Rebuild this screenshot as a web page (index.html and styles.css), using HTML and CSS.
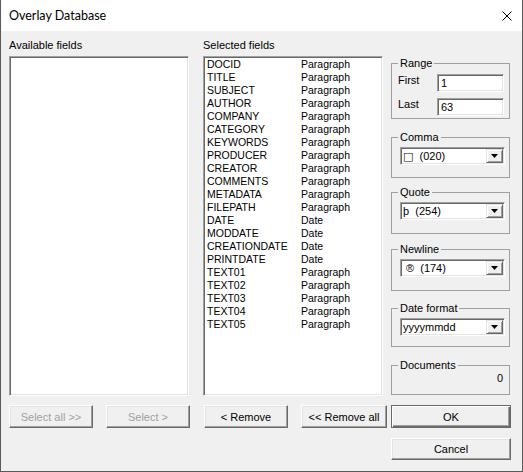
FILE: index.html
```html
<!DOCTYPE html>
<html>
<head>
<meta charset="utf-8">
<link rel="stylesheet" href="styles.css">
</head>
<body>
<div class="window">
  <div class="titlebar">
    <span class="title">Overlay Database</span>
    <svg class="close" width="10" height="10" viewBox="0 0 10 10"><path d="M0.5 0.5L9.5 9.5M9.5 0.5L0.5 9.5" stroke="#000" stroke-width="1" fill="none"/></svg>
  </div>
  <div class="content">
    <div class="panel">
      <div class="label">Available fields</div>
      <div class="listbox"></div>
      <div class="btnrow">
        <div class="btn disabled">Select all &gt;&gt;</div>
        <div class="btn disabled">Select &gt;</div>
      </div>
    </div>
    <div class="panel panel-selected">
      <div class="label">Selected fields</div>
      <div class="listbox">
        <div class="row"><span class="name">DOCID</span><span>Paragraph</span></div>
        <div class="row"><span class="name">TITLE</span><span>Paragraph</span></div>
        <div class="row"><span class="name">SUBJECT</span><span>Paragraph</span></div>
        <div class="row"><span class="name">AUTHOR</span><span>Paragraph</span></div>
        <div class="row"><span class="name">COMPANY</span><span>Paragraph</span></div>
        <div class="row"><span class="name">CATEGORY</span><span>Paragraph</span></div>
        <div class="row"><span class="name">KEYWORDS</span><span>Paragraph</span></div>
        <div class="row"><span class="name">PRODUCER</span><span>Paragraph</span></div>
        <div class="row"><span class="name">CREATOR</span><span>Paragraph</span></div>
        <div class="row"><span class="name">COMMENTS</span><span>Paragraph</span></div>
        <div class="row"><span class="name">METADATA</span><span>Paragraph</span></div>
        <div class="row"><span class="name">FILEPATH</span><span>Paragraph</span></div>
        <div class="row"><span class="name">DATE</span><span>Date</span></div>
        <div class="row"><span class="name">MODDATE</span><span>Date</span></div>
        <div class="row"><span class="name">CREATIONDATE</span><span>Date</span></div>
        <div class="row"><span class="name">PRINTDATE</span><span>Date</span></div>
        <div class="row"><span class="name">TEXT01</span><span>Paragraph</span></div>
        <div class="row"><span class="name">TEXT02</span><span>Paragraph</span></div>
        <div class="row"><span class="name">TEXT03</span><span>Paragraph</span></div>
        <div class="row"><span class="name">TEXT04</span><span>Paragraph</span></div>
        <div class="row"><span class="name">TEXT05</span><span>Paragraph</span></div>
      </div>
      <div class="btnrow">
        <div class="btn">&lt; Remove</div>
        <div class="btn btn-wide">&lt;&lt; Remove all</div>
      </div>
    </div>
    <div class="side">
      <fieldset class="group group-range">
        <legend>Range</legend>
        <div class="field"><span class="field-label">First</span><div class="input">1</div></div>
        <div class="field"><span class="field-label">Last</span><div class="input">63</div></div>
      </fieldset>
      <fieldset class="group group-combo group-comma">
        <legend>Comma</legend>
        <div class="combo"><span class="combo-text"><span class="box-glyph">□</span>&nbsp; (020)</span><span class="combo-btn"><svg width="7" height="4" viewBox="0 0 7 4"><path d="M0 0H7L3.5 4Z" fill="#000"/></svg></span></div>
      </fieldset>
      <fieldset class="group group-combo group-quote">
        <legend>Quote</legend>
        <div class="combo"><span class="combo-text">þ&nbsp; (254)</span><span class="combo-btn"><svg width="7" height="4" viewBox="0 0 7 4"><path d="M0 0H7L3.5 4Z" fill="#000"/></svg></span></div>
      </fieldset>
      <fieldset class="group group-combo group-newline">
        <legend>Newline</legend>
        <div class="combo"><span class="combo-text combo-text-indent">®&nbsp; (174)</span><span class="combo-btn"><svg width="7" height="4" viewBox="0 0 7 4"><path d="M0 0H7L3.5 4Z" fill="#000"/></svg></span></div>
      </fieldset>
      <fieldset class="group group-combo group-date">
        <legend>Date format</legend>
        <div class="combo"><span class="combo-text">yyyymmdd</span><span class="combo-btn"><svg width="7" height="4" viewBox="0 0 7 4"><path d="M0 0H7L3.5 4Z" fill="#000"/></svg></span></div>
      </fieldset>
      <fieldset class="group group-docs">
        <legend>Documents</legend>
        <div class="docs-count">0</div>
      </fieldset>
      <div class="btn btn-side btn-default">OK</div>
      <div class="btn btn-side btn-cancel">Cancel</div>
    </div>
  </div>
</div>
</body>
</html>
```
FILE: styles.css
```css
html, body {
  margin: 0;
  padding: 0;
  background: #f0f0f0;
}
body {
  font-family: "Liberation Sans", Arial, sans-serif;
  font-size: 11px;
  color: #000;
}
.window {
  width: 523px;
  height: 472px;
  box-sizing: border-box;
  background: #f0f0f0;
  border: 1px solid #5a5a5a;
  border-top: 0;
  display: flex;
  flex-direction: column;
  overflow: hidden;
}
.titlebar {
  height: 31px;
  flex: none;
  background: #fff;
  display: flex;
  align-items: center;
  justify-content: space-between;
  padding: 0 10px 0 8px;
}
.title {
  font-family: Lato, "Noto Sans", sans-serif;
  font-size: 12.5px;
  color: #000;
}
.close {
  display: block;
}
.content {
  display: flex;
  padding: 8px 0 0 8px;
}
.panel {
  width: 180px;
  display: flex;
  flex-direction: column;
}
.panel-selected {
  margin-left: 14px;
}
.label {
  height: 13px;
  line-height: 13px;
  margin-bottom: 4px;
}
.listbox {
  height: 340px;
  box-sizing: border-box;
  background: #fff;
  border: 1px solid;
  border-color: #a0a0a0 #fff #fff #a0a0a0;
  box-shadow: inset 1px 1px 0 #696969, inset -1px -1px 0 #e3e3e3;
  padding: 1px 0 0 3px;
}
.row {
  display: flex;
  height: 13px;
  line-height: 13px;
  font-size: 10.5px;
  white-space: nowrap;
}
.name {
  width: 94px;
}
.btnrow {
  display: flex;
  justify-content: space-between;
  margin-top: 9px;
  margin-right: -1px;
}
.panel-selected .btnrow {
  margin-left: 1px;
  margin-right: -4px;
}
.btn {
  width: 84px;
  height: 23px;
  box-sizing: border-box;
  display: flex;
  align-items: center;
  justify-content: center;
  background: #f0f0f0;
  border: 1px solid;
  border-color: #fff #696969 #696969 #fff;
  box-shadow: inset -1px -1px 0 #a0a0a0, inset 1px 1px 0 #e3e3e3;
  white-space: nowrap;
}
.btn-wide {
  width: 86px;
}
.disabled {
  color: #a0a0a0;
}
.side {
  width: 120px;
  margin-left: 8px;
  display: flex;
  flex-direction: column;
}
.group {
  margin: 0;
  width: 119px;
  box-sizing: border-box;
  min-width: 0;
  border: 1px solid #a0a0a0;
  padding: 3px 4px 12px 6px;
}
.group legend {
  padding: 0 2px;
  height: 14px;
  line-height: 14px;
}
.group-range {
  margin-top: 17px;
  padding: 4px 5px 2px 6px;
}
.field {
  display: flex;
  align-items: flex-start;
  height: 18px;
}
.field + .field {
  margin-top: 6px;
}
.field-label {
  width: 39px;
  line-height: 13px;
}
.input {
  width: 67px;
  height: 18px;
  box-sizing: border-box;
  background: #fff;
  border: 1px solid;
  border-color: #a0a0a0 #fff #fff #a0a0a0;
  box-shadow: inset 1px 1px 0 #696969, inset -1px -1px 0 #e3e3e3;
  padding-left: 3px;
  line-height: 16px;
}
.group-comma { margin-top: 11px; }
.group-quote { margin-top: 7px; padding-bottom: 13px; }
.group-newline { margin-top: 8px; padding-bottom: 13px; }
.group-date { margin-top: 10px; padding-bottom: 10px; }
.group-docs {
  margin-top: 11px;
  padding: 0 6px 9px 6px;
}
.docs-count {
  height: 13px;
  line-height: 13px;
  text-align: right;
}
.combo {
  margin-left: 2px;
  width: 105px;
  height: 18px;
  box-sizing: border-box;
  display: flex;
  background: #fff;
  border: 1px solid;
  border-color: #a0a0a0 #fff #fff #a0a0a0;
  box-shadow: inset 1px 1px 0 #696969, inset -1px -1px 0 #e3e3e3;
  padding: 1px;
}
.combo-text {
  flex: 1;
  line-height: 14px;
  padding-left: 1px;
  white-space: nowrap;
}
.box-glyph {
  font-family: "DejaVu Sans", sans-serif;
  font-size: 11px;
}
.combo-text-indent {
  padding-left: 4px;
}
.combo-btn {
  width: 17px;
  box-sizing: border-box;
  background: #f0f0f0;
  border: 1px solid;
  border-color: #e3e3e3 #696969 #696969 #e3e3e3;
  box-shadow: inset 1px 1px 0 #fff, inset -1px -1px 0 #a0a0a0;
  display: flex;
  align-items: center;
  justify-content: center;
}
.combo-btn svg {
  display: block;
}
.btn-side {
  width: 120px;
}
.btn-default {
  margin-top: 10px;
  border-color: #696969;
  box-shadow: inset 1px 1px 0 #fff, inset -1px -1px 0 #696969, inset -2px -2px 0 #a0a0a0;
}
.btn-cancel {
  margin-top: 10px;
  height: 22px;
}
```
